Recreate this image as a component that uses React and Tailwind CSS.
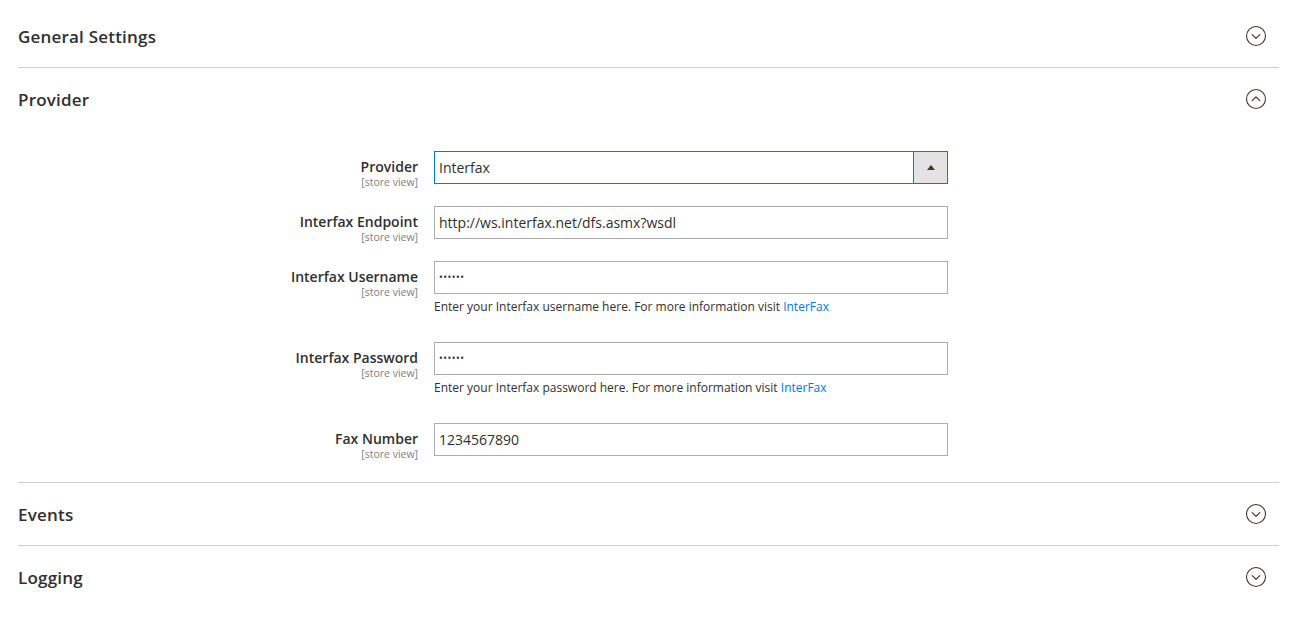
import React from "react";

const Chevron = ({ up }) => (
  <svg width="22" height="22" viewBox="0 0 22 22" fill="none">
    <circle cx="11" cy="11" r="9.5" stroke="#41362f" strokeWidth="1.1" />
    {up ? (
      <path d="M7.2 12.6 L11 8.8 L14.8 12.6" stroke="#41362f" strokeWidth="1.2" strokeLinecap="round" strokeLinejoin="round" />
    ) : (
      <path d="M7.2 9.6 L11 13.4 L14.8 9.6" stroke="#41362f" strokeWidth="1.2" strokeLinecap="round" strokeLinejoin="round" />
    )}
  </svg>
);

const SectionHeader = ({ title, open }) => (
  <div className="flex h-[62px] items-center justify-between pr-[12px]">
    <h2 className="pt-[2px] text-[17px] font-semibold tracking-[0.2px] text-[#303030]">{title}</h2>
    <Chevron up={open} />
  </div>
);

const Field = ({ label, children, note }) => (
  <div className="flex gap-[16px]">
    <div className="flex h-[33px] w-[400px] flex-col items-end pt-[7px]">
      <span className="text-[14px] font-semibold leading-[18px] text-[#303030]">{label}</span>
      <span className="text-[10.5px] leading-[12px] text-[#808080]">[store view]</span>
    </div>
    <div className="w-[514px]">
      {children}
      {note && (
        <p className="pb-[3px] pt-[3px] text-[12px] leading-[20px] text-[#303030]">
          {note} <span className="text-[#007bdb]">InterFax</span>
        </p>
      )}
    </div>
  </div>
);

const TextBox = ({ value, dots }) => (
  <div className="flex h-[33px] items-center border border-[#adadad] bg-white px-[4px] text-[14px] text-[#303030]">
    {dots ? <span className="text-[10px] tracking-[0.5px]">••••••</span> : value}
  </div>
);

export default function App() {
  return (
    <div
      className="min-h-screen bg-white px-[18px] pt-[5px]"
      style={{ fontFamily: '"Open Sans", "Liberation Sans", sans-serif' }}
    >
      <SectionHeader title="General Settings" />
      <div className="border-t border-[#cccccc]" />
      <SectionHeader title="Provider" open />
      <div className="flex flex-col gap-[22px] pb-[26px] pt-[21px]">
        <Field label="Provider">
          <div className="flex h-[33px] border border-[#007bdb] bg-white">
            <div className="flex flex-1 items-center px-[4px] text-[14px] text-[#303030]">Interfax</div>
            <div className="flex w-[34px] items-center justify-center border-l border-[#007bdb] bg-[#e3e3e3]">
              <div className="h-0 w-0 border-x-[4px] border-b-[5px] border-x-transparent border-b-[#41362f]" />
            </div>
          </div>
        </Field>
        <Field label="Interfax Endpoint">
          <TextBox value="http://ws.interfax.net/dfs.asmx?wsdl" />
        </Field>
        <Field label="Interfax Username" note="Enter your Interfax username here. For more information visit">
          <TextBox dots />
        </Field>
        <Field label="Interfax Password" note="Enter your Interfax password here. For more information visit">
          <TextBox dots />
        </Field>
        <Field label="Fax Number">
          <TextBox value="1234567890" />
        </Field>
      </div>
      <div className="border-t border-[#cccccc]" />
      <SectionHeader title="Events" />
      <div className="border-t border-[#cccccc]" />
      <SectionHeader title="Logging" />
    </div>
  );
}
